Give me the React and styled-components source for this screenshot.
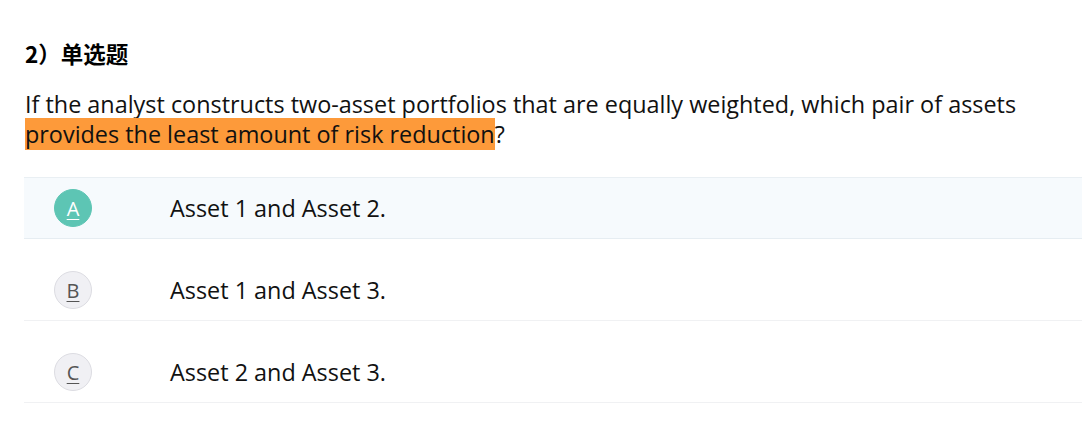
import React from "react";
import styled, { createGlobalStyle } from "styled-components";

const GlobalStyle = createGlobalStyle`
  body {
    margin: 0;
    background: #ffffff;
    font-family: "Open Sans", "Noto Sans", "Noto Sans CJK SC", sans-serif;
    color: #111;
  }
`;

const Page = styled.div`
  padding: 39px 0 0 25px;
  overflow: hidden;
`;

const Heading = styled.div`
  font-family: "Noto Sans CJK SC", sans-serif;
  font-weight: 700;
  font-size: 22.5px;
  line-height: 28px;
  height: 28px;
  color: #000;
`;

const Question = styled.p`
  margin: 22px 0 0;
  font-size: 23.4px;
  line-height: 30px;
  color: #111;
  padding-right: 30px;
`;

const Mark = styled.span`
  background: #fd9a3a;
`;

const Options = styled.div`
  margin-top: 28px;
  display: flex;
  flex-direction: column;
  gap: 20px;
  margin-left: -1px;
  margin-right: -20px;
`;

const Option = styled.div`
  display: flex;
  align-items: center;
  height: 60px;
  border-top: 1px solid ${(p) => (p.$active ? "#e9eff3" : "transparent")};
  border-bottom: 1px solid ${(p) => (p.$active ? "#e6edf2" : "#f0f1f3")};
  background: ${(p) => (p.$active ? "#f6fafd" : "#fff")};
`;

const Letter = styled.span`
  width: 38px;
  height: 38px;
  margin-left: 30px;
  border-radius: 50%;
  box-sizing: border-box;
  display: flex;
  align-items: center;
  justify-content: center;
  font-size: 20px;
  text-decoration: underline;
  text-decoration-thickness: 1px;
  text-underline-offset: 3px;
  background: ${(p) => (p.$active ? "#5dc5b4" : "#f0f0f4")};
  color: ${(p) => (p.$active ? "#fff" : "#555")};
  border: 1px solid ${(p) => (p.$active ? "#5dc5b4" : "#dcdce2")};
`;

const Label = styled.span`
  margin-left: 78px;
  font-size: 23.4px;
  color: #111;
`;

const options = [
  { key: "A", text: "Asset 1 and Asset 2.", active: true },
  { key: "B", text: "Asset 1 and Asset 3." },
  { key: "C", text: "Asset 2 and Asset 3." },
];

export default function App() {
  return (
    <>
      <GlobalStyle />
      <Page>
        <Heading>2）单选题</Heading>
        <Question>
          If the analyst constructs two-asset portfolios that are equally
          weighted, which pair of assets{" "}
          <Mark>provides the least amount of risk reduction</Mark>?
        </Question>
        <Options>
          {options.map((o) => (
            <Option key={o.key} $active={o.active}>
              <Letter $active={o.active}>{o.key}</Letter>
              <Label>{o.text}</Label>
            </Option>
          ))}
        </Options>
      </Page>
    </>
  );
}
